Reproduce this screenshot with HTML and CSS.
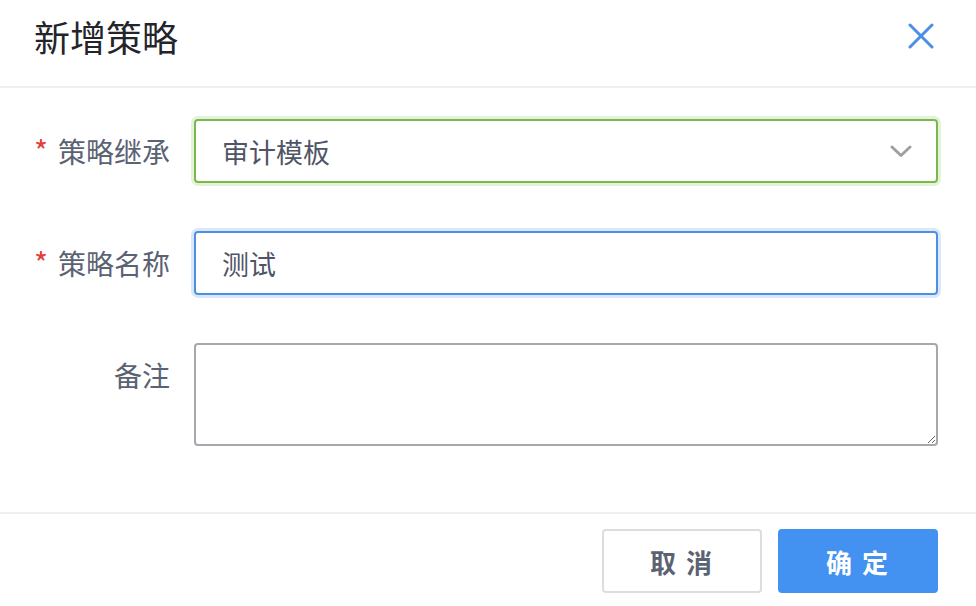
FILE: index.html
```html
<!DOCTYPE html>
<html lang="zh">
<head>
<meta charset="utf-8">
<title>新增策略</title>
<link rel="stylesheet" href="styles.css">
</head>
<body>
<div class="dialog">
  <div class="dialog-header">
    <h1 class="dialog-title">新增策略</h1>
    <button class="close-btn" aria-label="关闭">
      <svg width="26" height="26" viewBox="0 0 26 26"><path d="M2 2 L24 24 M24 2 L2 24" stroke="#4a8fe6" stroke-width="3" stroke-linecap="round" fill="none"/></svg>
    </button>
  </div>
  <div class="dialog-body">
    <div class="form-row">
      <label class="form-label"><span class="req">*</span>策略继承</label>
      <div class="field select-field">
        <span class="field-text">审计模板</span>
        <svg class="chevron" width="22" height="13" viewBox="0 0 22 13"><path d="M2 2 L11 10.5 L20 2" stroke="#a0a0a4" stroke-width="3" fill="none" stroke-linecap="round" stroke-linejoin="round"/></svg>
      </div>
    </div>
    <div class="form-row">
      <label class="form-label"><span class="req">*</span>策略名称</label>
      <div class="field input-field">
        <span class="field-text">测试</span>
      </div>
    </div>
    <div class="form-row">
      <label class="form-label">备注</label>
      <textarea class="field textarea-field"></textarea>
    </div>
  </div>
  <div class="dialog-footer">
    <button class="btn btn-default">取 消</button>
    <button class="btn btn-primary">确 定</button>
  </div>
</div>
</body>
</html>
```
FILE: styles.css
```css
* { box-sizing: border-box; }
html, body {
  margin: 0;
  padding: 0;
  background: #ffffff;
  font-family: "Noto Sans CJK SC", "Noto Sans", sans-serif;
}
.dialog {
  width: 976px;
  height: 606px;
  background: #fff;
}
.dialog-header {
  height: 88px;
  display: flex;
  align-items: center;
  justify-content: space-between;
  padding: 0 42px 14px 34px;
  border-bottom: 2px solid #efeff1;
}
.dialog-title {
  margin: 0;
  font-size: 36px;
  font-weight: 400;
  color: #23252b;
  line-height: 1;
}
.close-btn {
  border: 0;
  background: transparent;
  padding: 0;
  width: 26px;
  height: 26px;
  display: flex;
  cursor: pointer;
}
.dialog-body {
  padding: 31px 38px 0 0;
  height: 424px;
  display: flex;
  flex-direction: column;
  gap: 48px;
}
.form-row {
  display: flex;
  align-items: flex-start;
  gap: 24px;
}
.form-label {
  width: 170px;
  height: 64px;
  flex: none;
  text-align: right;
  font-size: 28px;
  line-height: 64px;
  color: #5b6273;
}
.req {
  color: #e2403a;
  margin-right: 10px;
  font-size: 30px;
  line-height: 1;
}
.field {
  flex: 1;
  height: 64px;
  border-radius: 4px;
  display: flex;
  align-items: center;
  padding: 0 24px 0 26px;
  font-size: 27px;
  color: #4f5566;
}
.field-text { flex: 1; }
.select-field {
  border: 2px solid #7bb74c;
  box-shadow: 0 0 0 3px #e3f3d7;
}
.chevron { flex: none; }
.input-field {
  border: 2px solid #4d8fe2;
  box-shadow: 0 0 0 3px #d9e8fb;
}
.textarea-field {
  height: 103px;
  border: 2px solid #a6a8ad;
  resize: vertical;
  outline: none;
  font-family: inherit;
  background: #fff;
}
.dialog-footer {
  border-top: 2px solid #efeff1;
  height: 94px;
  display: flex;
  justify-content: flex-end;
  align-items: flex-start;
  gap: 16px;
  padding: 15px 38px 0 0;
}
.btn {
  width: 160px;
  height: 64px;
  border-radius: 4px;
  font-family: inherit;
  font-size: 26px;
  font-weight: 700;
  cursor: pointer;
  letter-spacing: 2px;
}
.btn-default {
  background: #fff;
  border: 2px solid #dcdde0;
  color: #5b6273;
}
.btn-primary {
  background: #4392f1;
  border: 2px solid #4392f1;
  color: #fff;
}
```
